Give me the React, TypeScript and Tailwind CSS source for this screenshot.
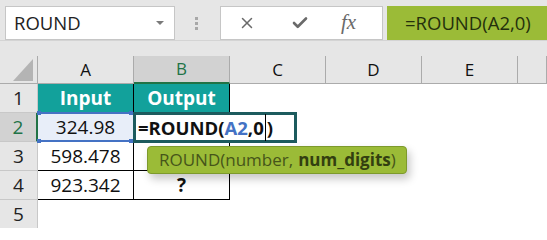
import { X, Check } from "lucide-react"

const font = { fontFamily: '"Open Sans", "Noto Sans", sans-serif' }

const COLS = ["A", "B", "C", "D", "E", ""]

type Row = { n: number; a?: string; b?: string; head?: boolean }

const ROWS: Row[] = [
  { n: 1, a: "Input", b: "Output", head: true },
  { n: 2, a: "324.98" },
  { n: 3, a: "598.478" },
  { n: 4, a: "923.342", b: "?" },
  { n: 5 },
]

function Toolbar() {
  return (
    <div className="flex h-[41px] items-start border-b border-[#d4d4d4] bg-[#e6e6e6] pt-[6px]">
      <div className="ml-[5px] flex h-[34px] w-[170px] items-center justify-between border border-[#c6c6c6] bg-white pl-[8px] pr-[10px]">
        <span className="text-[18.5px] text-[#222]">ROUND</span>
        <span className="h-0 w-0 border-x-[4px] border-t-[4px] border-x-transparent border-t-[#7a7a7a]" />
      </div>
      <div className="ml-[20px] mt-[11px] flex flex-col gap-[2px]">
        <span className="h-[3px] w-[3px] bg-[#a8a8a8]" />
        <span className="h-[3px] w-[3px] bg-[#a8a8a8]" />
        <span className="h-[3px] w-[3px] bg-[#a8a8a8]" />
      </div>
      <div className="ml-[22px] flex h-[34px] w-[163px] items-center border border-[#c6c6c6] bg-white">
        <X className="ml-[17px] h-[18px] w-[18px] text-[#6a6a6a]" strokeWidth={2} />
        <Check className="ml-[35px] h-[18px] w-[18px] text-[#6a6a6a]" strokeWidth={3.5} />
        <span
          className="ml-[32px] text-[21px] italic text-[#6a6a6a]"
          style={{ fontFamily: '"Liberation Serif", serif' }}
        >
          fx
        </span>
      </div>
      <div className="ml-[4px] flex h-[34px] flex-1 items-center bg-[#9bbb37] pl-[18px]">
        <span className="text-[18.5px] text-[#24300c]">=ROUND(A2,0)</span>
      </div>
    </div>
  )
}

function ColumnHeaders() {
  return (
    <div className="grid grid-cols-[38px_96px_96px_96px_96px_96px_1fr] bg-[#e6e6e6] pt-[15px]">
      <div className="relative h-[28px] border-b border-r border-[#ababab]">
        <svg className="absolute bottom-[2px] right-[4px]" width="20" height="22" viewBox="0 0 20 22">
          <polygon points="20,0 20,22 0,22" fill="#b4b4b4" />
        </svg>
      </div>
      {COLS.map((c, i) => (
        <div
          key={i}
          className={
            c === "B"
              ? "flex h-[28px] items-end justify-center border-b-2 border-r border-b-[#217346] border-r-[#ababab] bg-[#d2d2d2] pb-[1px] text-[17px] text-[#217346]"
              : "flex h-[28px] items-end justify-center border-b border-r border-[#ababab] pb-[1px] text-[17px] text-[#111]"
          }
        >
          {c}
        </div>
      ))}
    </div>
  )
}

function Cells() {
  return (
    <div className="grid grid-cols-[38px_96px_96px_1fr]">
      {ROWS.map((r) => {
        const active = r.n === 2
        const inTable = r.n <= 4
        return (
          <div key={r.n} className="contents">
            <div
              className={
                active
                  ? "flex h-[29px] items-center justify-center border-b border-r-2 border-b-[#c8c8c8] border-r-[#217346] bg-[#d2d2d2] text-[19px] text-[#217346]"
                  : "flex h-[29px] items-center justify-center border-b border-r border-[#c8c8c8] bg-[#e6e6e6] text-[19px] text-[#222]"
              }
            >
              {r.n}
            </div>
            <div
              className={
                r.head
                  ? "flex h-[29px] items-center justify-center border-b border-r border-black bg-[#12a19b] text-[19px] font-bold text-white"
                  : active
                  ? "relative flex h-[29px] items-center justify-center border-b border-r border-black bg-[#e8eef9] text-[19px] text-[#111]"
                  : inTable
                  ? "flex h-[29px] items-center justify-center border-b border-r border-black text-[19px] text-[#111]"
                  : "h-[29px]"
              }
            >
              {r.a}
              {active && (
                <>
                  <span className="absolute left-0 right-[2px] top-[-1px] h-[2px] bg-[#4472c4]" />
                  <span className="absolute bottom-[-1px] left-0 right-[2px] h-[2px] bg-[#4472c4]" />
                  <span className="absolute left-[-1px] top-[-2px] h-[4px] w-[4px] bg-[#4472c4]" />
                  <span className="absolute right-0 top-[-2px] h-[4px] w-[4px] bg-[#4472c4]" />
                  <span className="absolute bottom-[-2px] left-[-1px] h-[4px] w-[4px] bg-[#4472c4]" />
                  <span className="absolute bottom-[-2px] right-0 h-[4px] w-[4px] bg-[#4472c4]" />
                </>
              )}
            </div>
            <div
              className={
                r.head
                  ? "flex h-[29px] items-center justify-center border-b border-r border-black bg-[#12a19b] text-[19px] font-bold text-white"
                  : inTable
                  ? "flex h-[29px] items-center justify-center border-b border-r border-black text-[19px] font-bold text-[#111]"
                  : "h-[29px]"
              }
            >
              {r.b}
            </div>
            <div className="h-[29px]" />
          </div>
        )
      })}
    </div>
  )
}

export default function App() {
  return (
    <div className="relative h-[228px] w-[547px] overflow-hidden bg-white" style={font}>
      <Toolbar />
      <ColumnHeaders />
      <Cells />

      {/* cell in edit mode */}
      <div className="absolute left-[133px] top-[112px] flex h-[31px] w-[164px] items-center border-[3px] border-[#1d5b5e] bg-white pl-[2px]">
        <span className="text-[18.5px] font-bold text-[#111]">
          =ROUND(<span className="text-[#4472c4]">A2</span>,0
        </span>
        <span className="mx-[1px] h-[27px] w-px bg-black" />
        <span className="text-[18.5px] font-bold text-[#111]">)</span>
      </div>

      {/* argument tooltip */}
      <div className="absolute left-[147px] top-[146px] flex h-[28px] w-[260px] items-center rounded-[4px] border border-[#7d9a2c] bg-[#9bbb37] pl-[11px] text-[17px] text-[#46551a] shadow-[3px_5px_8px_rgba(0,0,0,0.22)]">
        ROUND(number, <span className="ml-[5px] font-bold text-[#333f10]">num_digits</span>)
      </div>
    </div>
  )
}
